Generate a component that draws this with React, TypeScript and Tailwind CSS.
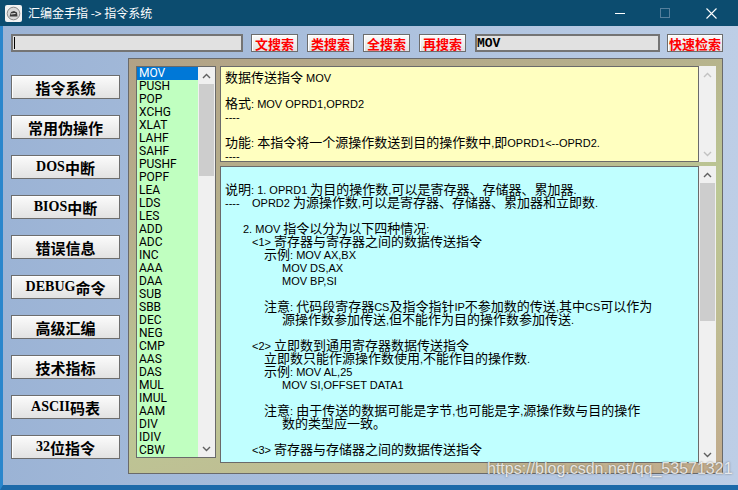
import React from "react";

const listItems = [
  "MOV", "PUSH", "POP", "XCHG", "XLAT", "LAHF", "SAHF", "PUSHF", "POPF", "LEA",
  "LDS", "LES", "ADD", "ADC", "INC", "AAA", "DAA", "SUB", "SBB", "DEC",
  "NEG", "CMP", "AAS", "DAS", "MUL", "IMUL", "AAM", "DIV", "IDIV", "CBW",
];

const navButtons = [
  "指令系统", "常用伪操作", "DOS中断", "BIOS中断", "错误信息",
  "DEBUG命令", "高级汇编", "技术指标", "ASCII码表", "32位指令",
];

const yellowLines = [
  "数据传送指令 MOV",
  "",
  "格式: MOV OPRD1,OPRD2",
  "----",
  "",
  "功能: 本指令将一个源操作数送到目的操作数中,即OPRD1<--OPRD2.",
  "----",
];

type Line = { c: string; t: string; lead?: string };

const cyanLines: Line[] = [
  { c: "", t: "" },
  { c: "", t: "说明: 1. OPRD1 为目的操作数,可以是寄存器、存储器、累加器." },
  { c: "", lead: "----", t: "OPRD2 为源操作数,可以是寄存器、存储器、累加器和立即数." },
  { c: "", t: "" },
  { c: "pl-[18px]", t: "2. MOV 指令以分为以下四种情况:" },
  { c: "pl-[27px]", t: "<1> 寄存器与寄存器之间的数据传送指令" },
  { c: "pl-[39px]", t: "示例: MOV AX,BX" },
  { c: "pl-[57px]", t: "MOV DS,AX" },
  { c: "pl-[57px]", t: "MOV BP,SI" },
  { c: "", t: "" },
  { c: "pl-[39px]", t: "注意: 代码段寄存器CS及指令指针IP不参加数的传送,其中CS可以作为" },
  { c: "pl-[57px]", t: "源操作数参加传送,但不能作为目的操作数参加传送." },
  { c: "", t: "" },
  { c: "pl-[27px]", t: "<2> 立即数到通用寄存器数据传送指令" },
  { c: "pl-[39px]", t: "立即数只能作源操作数使用,不能作目的操作数." },
  { c: "pl-[39px]", t: "示例: MOV AL,25" },
  { c: "pl-[57px]", t: "MOV SI,OFFSET DATA1" },
  { c: "", t: "" },
  { c: "pl-[39px]", t: "注意: 由于传送的数据可能是字节,也可能是字,源操作数与目的操作" },
  { c: "pl-[57px]", t: "数的类型应一致。" },
  { c: "", t: "" },
  { c: "pl-[27px]", t: "<3> 寄存器与存储器之间的数据传送指令" },
];

const isLatin = (s: string) => /^[\x00-\x7f]+$/.test(s);

// latin runs are rendered smaller, like the old MS Sans Serif next to 13px hanzi
const Mixed = ({ t }: { t: string }) => (
  <>
    {t.split(/([\x00-\x7f]+)/).map((s, i) =>
      isLatin(s) ? (
        <span key={i} className="font-['Liberation_Sans'] text-[11px]">
          {s}
        </span>
      ) : (
        s
      )
    )}
  </>
);

const NavLabel = ({ t }: { t: string }) => (
  <>
    {t.split(/([\x00-\x7f]+)/).map((s, i) =>
      isLatin(s) ? (
        <span key={i} className="font-['Liberation_Serif'] text-[14px]">
          {s}
        </span>
      ) : (
        s
      )
    )}
  </>
);

const Chevron = ({ up, color }: { up?: boolean; color: string }) => (
  <svg width="9" height="6" viewBox="0 0 9 6">
    <path
      d={up ? "M1 5 L4.5 1.5 L8 5" : "M1 1 L4.5 4.5 L8 1"}
      stroke={color}
      strokeWidth="1.4"
      fill="none"
    />
  </svg>
);

const ScrollBar = ({ thumb, color }: { thumb?: string; color: string }) => (
  <div className="flex flex-col w-[17px] shrink-0 bg-[#f0f0f0]">
    <div className="flex h-[17px] items-center justify-center">
      <Chevron up color={color} />
    </div>
    <div className="flex-1">
      {thumb && <div className={`mx-px bg-[#cdcdcd] ${thumb}`} />}
    </div>
    <div className="flex h-[17px] items-center justify-center">
      <Chevron color={color} />
    </div>
  </div>
);

const btnBase =
  "flex items-center justify-center border border-[#6d6d6d] bg-gradient-to-b from-[#fbfbfb] to-[#e2e2e2] shadow-[inset_1px_1px_0_#ffffff]";

const SearchBtn = ({ label, cls }: { label: string; cls: string }) => (
  <div
    className={`${btnBase} h-[18px] font-['Noto_Sans_CJK_SC',sans-serif] text-[13px] font-bold leading-none text-[#ff0000] ${cls}`}
  >
    {label}
  </div>
);

export default function App() {
  return (
    <div className="relative flex flex-col w-[738px] h-[490px] overflow-hidden font-['Noto_Sans_CJK_SC',sans-serif]">
      {/* title bar */}
      <div className="flex items-center h-[26px] shrink-0 bg-[#0c4c6f] text-white">
        <div className="ml-[5px] flex h-[17px] w-[17px] items-center justify-center rounded-[2px] bg-[#f2f2f2]">
          <svg width="15" height="15" viewBox="0 0 15 15">
            <circle cx="7.5" cy="7.5" r="6.3" fill="#d8d8d8" stroke="#8a8a8a" strokeWidth="1" />
            <path d="M3.5 10.5 L5 6 L8 5 L11 6.5 L11.5 10.5 Z" fill="#3b3b3b" />
            <path d="M5 8 L9.5 7.5" stroke="#e8e8e8" strokeWidth="1" />
          </svg>
        </div>
        <div className="ml-[6px] text-[12px] leading-none">汇编金手指 -&gt; 指令系统</div>
        <div className="ml-auto flex items-center">
          <div className="mr-[35px] h-px w-[10px] bg-white" />
          <div className="mr-[36px] h-[10px] w-[10px] border border-[#557f9c]" />
          <svg className="mr-[21px]" width="11" height="11" viewBox="0 0 11 11">
            <path d="M0.5 0.5 L10.5 10.5 M10.5 0.5 L0.5 10.5" stroke="#ffffff" strokeWidth="1.1" />
          </svg>
        </div>
      </div>

      {/* window body */}
      <div className="flex flex-1 flex-col border-l-[3px] border-b-[5px] border-l-[#2a86cc] border-b-[#1d6aa9] bg-gradient-to-r from-[#9bb3d5] to-[#bdcee6] pl-[8px] pt-[8px]">
        {/* search row */}
        <div className="flex h-[18px] items-center">
          <div className="flex h-[18px] w-[232px] items-center border-2 border-[#747474] bg-[#e1e1e1]">
            <div className="ml-px h-[12px] w-px bg-black" />
          </div>
          <SearchBtn label="文搜索" cls="ml-[8px] w-[47px]" />
          <SearchBtn label="类搜索" cls="ml-[9px] w-[47px]" />
          <SearchBtn label="全搜索" cls="ml-[9px] w-[47px]" />
          <SearchBtn label="再搜索" cls="ml-[9px] w-[47px]" />
          <div className="ml-[9px] flex h-[18px] w-[185px] items-center border-2 border-[#747474] bg-[#e1e1e1] font-['Liberation_Mono'] text-[13px] font-bold leading-none text-black">
            MOV
          </div>
          <SearchBtn label="快速检索" cls="ml-[7px] w-[56px]" />
        </div>

        {/* main row */}
        <div className="mt-[6px] flex">
          <div className="flex w-[109px] flex-col gap-[16px] pt-[17px]">
            {navButtons.map((b) => (
              <div
                key={b}
                className={`${btnBase} h-[24px] text-[15px] font-bold leading-none text-black`}
              >
                <NavLabel t={b} />
              </div>
            ))}
          </div>

          <div className="ml-[8px] flex h-[416px] w-[595px] border border-[#6a6a6a] bg-[linear-gradient(160deg,#b2a286_0%,#b6b08c_30%,#bcc895_55%,#bfbd93_75%,#c1aa8c_100%)] pl-[7px] pr-[6px] pt-[7px]">
            {/* instruction list */}
            <div className="flex h-[392px] w-[80px] border border-[#6a6a6a]">
              <div className="flex-1 bg-[#c0ffc0] font-['Roboto',sans-serif] text-[12px] leading-[13px] text-black">
                {listItems.map((it, i) => (
                  <div
                    key={it}
                    className={
                      i === 0
                        ? "h-[13px] bg-[#0078d7] pl-[2px] text-white"
                        : "h-[13px] pl-[2px]"
                    }
                  >
                    {it}
                  </div>
                ))}
              </div>
              <ScrollBar thumb="h-[92px]" color="#606060" />
            </div>

            {/* description panes */}
            <div className="ml-[4px] flex w-[496px] flex-col gap-[4px]">
              <div className="flex h-[96px]">
                <div className="flex-1 border border-[#6a6a6a] bg-[#ffffc0] pl-[4px] pt-[3px] text-[13px] leading-[13px] text-black">
                  {yellowLines.map((l, i) => (
                    <div key={i} className="h-[13px] whitespace-pre">
                      <Mixed t={l} />
                    </div>
                  ))}
                </div>
                <ScrollBar color="#c2c2c2" />
              </div>

              <div className="flex h-[297px]">
                <div className="flex-1 border border-[#6a6a6a] bg-[#c0ffff] pl-[4px] pt-[2px] text-[13px] leading-[13px] text-black">
                  {cyanLines.map((l, i) => (
                    <div key={i} className={`h-[13px] whitespace-pre ${l.c}`}>
                      {l.lead && (
                        <span className="inline-block w-[27px] font-['Liberation_Sans'] text-[11px]">
                          {l.lead}
                        </span>
                      )}
                      <Mixed t={l.t} />
                    </div>
                  ))}
                </div>
                <ScrollBar thumb="h-[138px]" color="#606060" />
              </div>
            </div>
          </div>
        </div>
      </div>

      {/* csdn watermark */}
      <div className="absolute left-[487px] top-[459px] whitespace-nowrap font-['Liberation_Sans'] text-[16px] leading-[20px] text-white/80 [text-shadow:0_0_2px_rgba(60,60,60,0.7)]">
        https://blog.csdn.net/qq_53571321
      </div>
    </div>
  );
}
